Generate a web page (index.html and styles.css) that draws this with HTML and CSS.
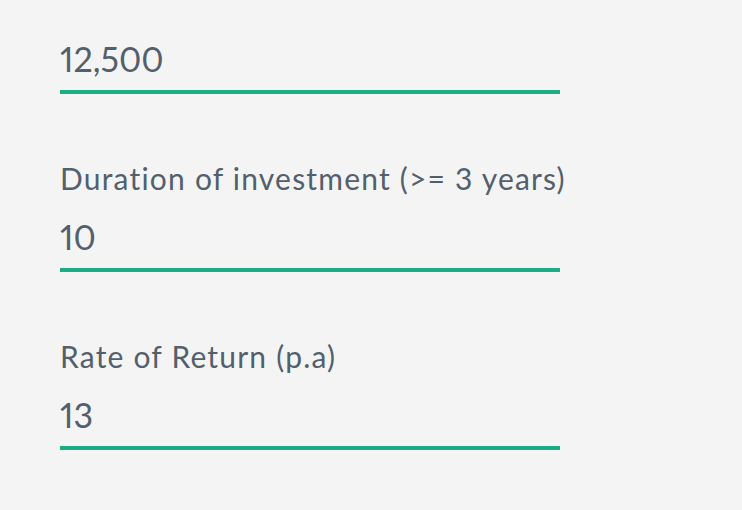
FILE: index.html
```html
<!DOCTYPE html>
<html lang="en">

<head>
  <meta charset="UTF-8">
  <meta name="viewport" content="width=device-width, initial-scale=1.0">
  <title>SIP Calculator</title>
  <link rel="stylesheet" href="styles.css">
</head>

<body>
  <div class="form">
    <div class="field first">
      <input type="text" id="amount" value="12,500">
    </div>
    <div class="field">
      <label for="duration">Duration of investment (&gt;= 3 years)</label>
      <input type="text" id="duration" value="10">
    </div>
    <div class="field">
      <label for="rate">Rate of Return (p.a)</label>
      <input type="text" id="rate" value="13">
    </div>
  </div>
</body>

</html>
```

FILE: styles.css
```css
body {
  margin: 0;
  font-family: Lato, "Open Sans", sans-serif;
  font-variant-ligatures: none;
  font-variant-numeric: proportional-nums;
  background-color: #f4f4f4;
  color: #535f6d;
}

.form {
  padding: 26px 60px;
}

.field {
  display: flex;
  flex-direction: column;
  width: 500px;
  margin-top: 66px;
}

.field.first {
  margin-top: 0;
}

label {
  font-size: 30px;
  line-height: 36px;
  letter-spacing: 1.2px;
  white-space: nowrap;
  margin-bottom: 8px;
}

input {
  box-sizing: content-box;
  height: 64px;
  padding: 0;
  margin: 0;
  border: none;
  border-bottom: 4px solid #1bae86;
  background: transparent;
  font-family: inherit;
  font-variant-ligatures: none;
  font-variant-numeric: proportional-nums;
  font-size: 34px;
  color: #535f6d;
  outline: none;
}
```
